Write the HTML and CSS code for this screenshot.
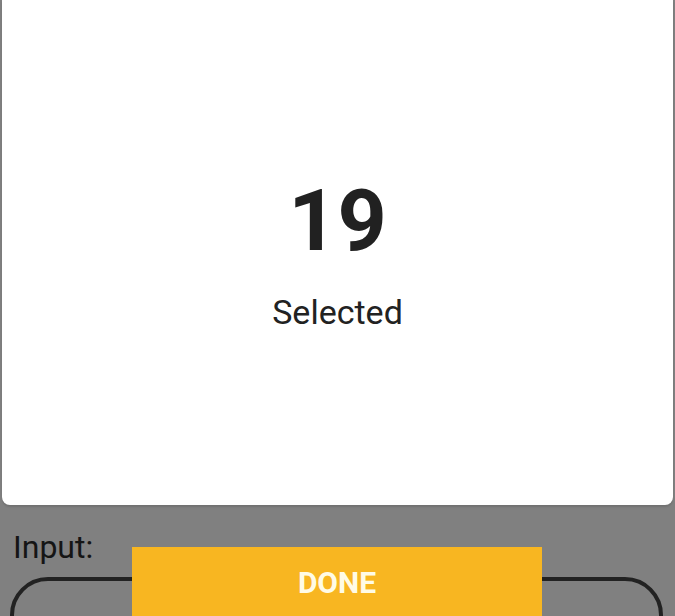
FILE: index.html
```html
<!DOCTYPE html>
<html>
<head>
<meta charset="utf-8">
<link rel="stylesheet" href="styles.css">
</head>
<body>
<div class="screen">
  <div class="card">
    <div class="count">19</div>
    <div class="label">Selected</div>
  </div>
  <div class="form">
    <div class="input-label">Input:</div>
    <div class="input-box"></div>
  </div>
  <button class="done">DONE</button>
</div>
</body>
</html>
```
FILE: styles.css
```css
html, body {
  margin: 0;
  padding: 0;
  background: #808080;
  overflow: hidden;
}
.screen {
  position: relative;
  width: 675px;
  height: 616px;
  overflow: hidden;
  font-family: Roboto, "Liberation Sans", sans-serif;
}
.card {
  margin: 0 2px;
  height: 505px;
  background: #ffffff;
  border-radius: 0 0 8px 8px;
  box-shadow: 0 2px 2px rgba(0, 0, 0, 0.12);
  display: flex;
  flex-direction: column;
  align-items: center;
  justify-content: center;
  gap: 31px;
}
.count {
  font-size: 86px;
  line-height: 86px;
  font-weight: 700;
  color: #212121;
  padding-top: 1px;
}
.label {
  font-size: 34px;
  line-height: 34px;
  color: #222222;
}
.form {
  padding: 26px 12px 0 10px;
}
.input-label {
  font-size: 32px;
  line-height: 32px;
  color: #151515;
  padding-left: 3px;
}
.input-box {
  margin-top: 14px;
  height: 90px;
  border: 4px solid #222222;
  border-radius: 38px;
}
.done {
  position: absolute;
  left: 132px;
  top: 547px;
  width: 410px;
  border: none;
  margin: 0;
  padding: 21px 0 39px;
  background: #f8b621;
  color: #fffbe6;
  font-family: Roboto, "Liberation Sans", sans-serif;
  font-weight: 700;
  font-size: 30px;
  line-height: 30px;
  text-align: center;
  display: block;
}
```
